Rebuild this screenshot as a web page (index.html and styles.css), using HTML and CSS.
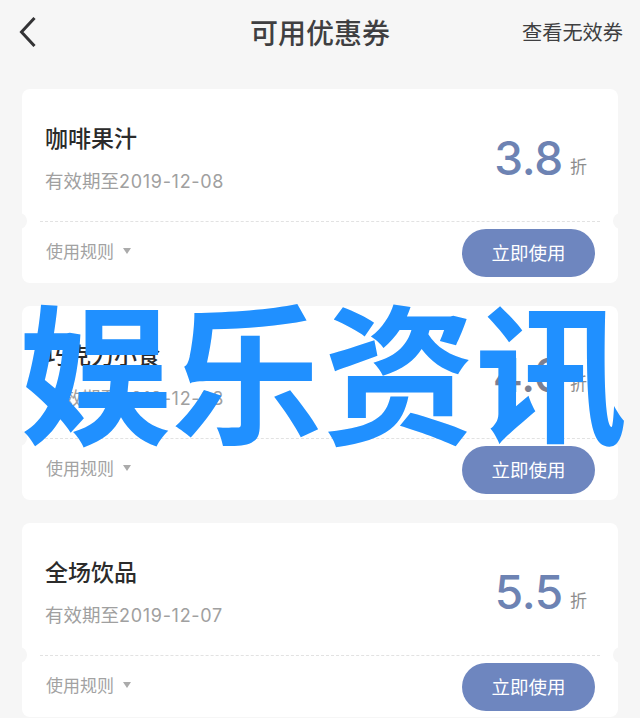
FILE: index.html
```html
<!DOCTYPE html>
<html lang="zh-CN">
<head>
<meta charset="utf-8">
<title>可用优惠券</title>
<link rel="stylesheet" href="styles.css">
</head>
<body>
<div class="page">
  <header class="nav">
    <svg class="back" width="17" height="30" viewBox="0 0 17 30"><path d="M15.5 1 L2.5 15 L15.5 29" fill="none" stroke="#333335" stroke-width="3"/></svg>
    <h1 class="title">可用优惠券</h1>
    <span class="invalid">查看无效券</span>
  </header>
  <main class="list">
    <section class="card">
      <div class="top">
        <div class="info">
          <div class="name">咖啡果汁</div>
          <div class="date">有效期至<span class="num">2019-12-08</span></div>
        </div>
        <div class="off"><span class="value">3.8</span><span class="unit">折</span></div>
      </div>
      <div class="bottom">
        <div class="rule">使用规则<i class="tri"></i></div>
        <div class="btn">立即使用</div>
      </div>
    </section>
    <section class="card">
      <div class="top">
        <div class="info">
          <div class="name">巧克力小食</div>
          <div class="date">有效期至<span class="num">2019-12-08</span></div>
        </div>
        <div class="off"><span class="value dim">4.0</span><span class="unit">折</span></div>
      </div>
      <div class="bottom">
        <div class="rule">使用规则<i class="tri"></i></div>
        <div class="btn">立即使用</div>
      </div>
    </section>
    <section class="card">
      <div class="top">
        <div class="info">
          <div class="name">全场饮品</div>
          <div class="date">有效期至<span class="num">2019-12-07</span></div>
        </div>
        <div class="off"><span class="value">5.5</span><span class="unit">折</span></div>
      </div>
      <div class="bottom">
        <div class="rule">使用规则<i class="tri"></i></div>
        <div class="btn">立即使用</div>
      </div>
    </section>
  </main>
  <div class="overlay">娱乐资讯</div>
</div>
</body>
</html>
```
FILE: styles.css
```css
* { box-sizing: border-box; }
html, body { margin: 0; padding: 0; }
body {
  background: #f6f6f6;
  font-family: "Noto Sans CJK SC", "Liberation Sans", sans-serif;
  overflow: hidden;
}
.page { position: relative; width: 640px; height: 718px; overflow: hidden; }
.nav {
  height: 89px;
  padding: 0 17px 25px 19px;
  display: flex;
  align-items: center;
  justify-content: space-between;
  position: relative;
}
.back { display: block; }
.title {
  position: absolute;
  left: 0; right: 0; top: 12px;
  margin: 0;
  text-align: center;
  font-size: 28px;
  line-height: 40px;
  font-weight: 500;
  color: #3f3f41;
}
.invalid { font-size: 20.2px; line-height: 28px; color: #3f3f41; }
.list { display: flex; flex-direction: column; gap: 23px; padding: 0 22px; }
.card {
  position: relative;
  height: 194px;
  background: #fff;
  border-radius: 8px;
  overflow: hidden;
}
.card::before, .card::after {
  content: "";
  position: absolute;
  top: 124px;
  width: 16px;
  height: 16px;
  border-radius: 50%;
  background: #f6f6f6;
}
.card::before { left: -11px; }
.card::after { right: -11px; }
.top {
  height: 133px;
  margin: 0 18px;
  padding: 0 13px 0 5px;
  border-bottom: 1px dashed #e2e2e2;
  display: flex;
  justify-content: space-between;
}
.info { padding-top: 30px; }
.name { font-size: 23px; line-height: 36px; font-weight: 500; color: #2b2b2b; }
.date { margin-top: 11px; font-size: 18.5px; line-height: 28px; color: #a0a0a0; white-space: nowrap; }
.num { font-family: "Inter", "Liberation Sans", sans-serif; font-size: 18px; letter-spacing: 0.7px; }
.off { display: flex; align-items: flex-start; padding-top: 33px; }
.value { font-family: "Inter", "Liberation Sans", sans-serif; font-size: 46px; font-weight: 500; line-height: 72px; color: #6d83b3; letter-spacing: -0.3px; }
.value.dim { color: #7c7f90; }
.unit { margin: 32px 0 0 7px; font-size: 17px; line-height: 24px; color: #8d8d8d; }
.bottom {
  height: 60px;
  padding: 7px 23px 0 24px;
  display: flex;
  justify-content: space-between;
  align-items: flex-start;
}
.rule {
  display: flex;
  align-items: center;
  height: 43px;
  font-size: 17px;
  color: #a2a2a2;
}
.tri {
  margin-left: 9px;
  width: 0; height: 0;
  border-left: 4px solid transparent;
  border-right: 4px solid transparent;
  border-top: 6px solid #ababab;
}
.btn {
  width: 133px;
  height: 48px;
  border-radius: 24px;
  background: #6e86bf;
  color: #fff;
  font-size: 18.5px;
  line-height: 46px;
  text-align: center;
}
.overlay {
  position: absolute;
  left: 19px;
  top: 259px;
  width: 612px;
  font-size: 152px;
  line-height: 216px;
  font-weight: 700;
  color: #2090ff;
  white-space: nowrap;
}
```
